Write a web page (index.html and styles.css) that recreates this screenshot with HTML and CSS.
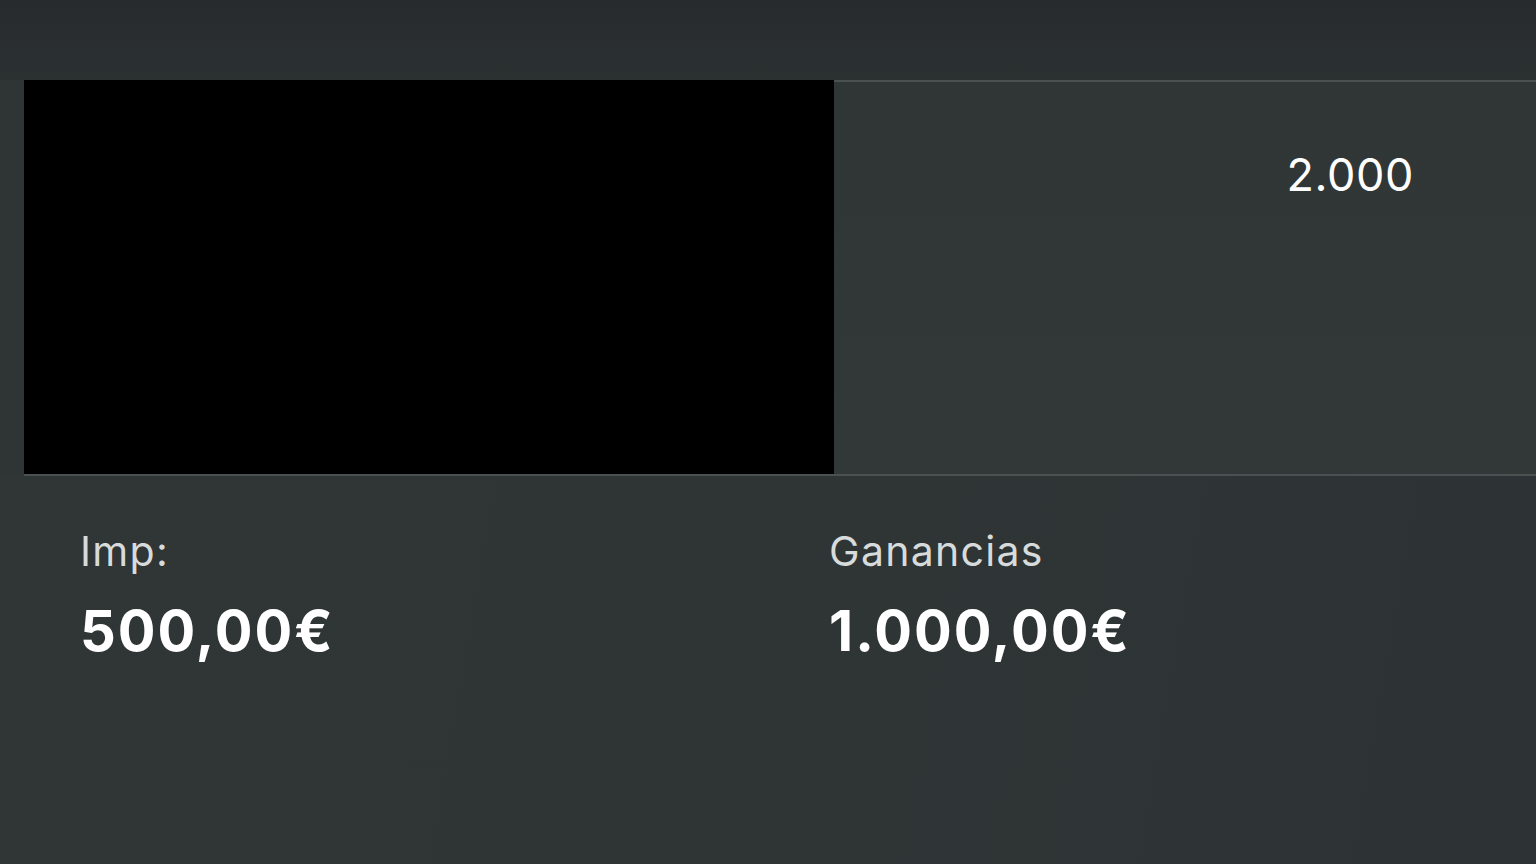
FILE: index.html
```html
<!DOCTYPE html>
<html lang="es">
<head>
    <meta charset="UTF-8">
    <meta name="viewport" content="width=device-width, initial-scale=1.0">
    <title>Resumen de apuesta</title>
    <link rel="stylesheet" href="styles.css">
</head>
<body>
    <div class="topbar"></div>

    <!-- Tarjeta principal: vídeo + cuota -->
    <div class="card">
        <div class="media"></div>
        <div class="summary">
            <span class="odds">2.000</span>
        </div>
    </div>

    <div class="divider"></div>

    <!-- Importe y ganancias -->
    <div class="stats">
        <div class="stat">
            <p class="stat-label">Imp:</p>
            <p class="stat-value">500,00€</p>
        </div>
        <div class="stat">
            <p class="stat-label">Ganancias</p>
            <p class="stat-value">1.000,00€</p>
        </div>
    </div>
</body>
</html>
```

FILE: styles.css
```css
body {
    margin: 0;
    height: 864px;
    overflow: hidden;
    font-family: Inter, "Noto Sans", sans-serif;
    background: linear-gradient(100deg, #303636 0%, #2f3535 60%, #2d3234 100%);
    color: #ffffff;
}

.topbar {
    height: 80px;
    background: linear-gradient(180deg, #272b2d 0%, #2b3031 100%);
}

.card {
    display: flex;
    padding-left: 24px;
    height: 394px;
    background: linear-gradient(90deg, #2f3434 0%, #323838 100%);
}

.media {
    width: 810px;
    background-color: #000000;
}

.summary {
    flex: 1;
    border-top: 2px solid #4b5151;
    text-align: right;
    padding-right: 122px;
    background: linear-gradient(180deg, #303636 0%, #323838 100%);
}

.odds {
    display: inline-block;
    margin-top: 65px;
    font-size: 45px;
    letter-spacing: 0.6px;
    color: #ffffff;
}

.divider {
    margin-left: 24px;
    height: 2px;
    background-color: #4b5151;
}

.stats {
    display: grid;
    grid-template-columns: 749px 1fr;
    padding: 50px 0 0 80px;
}

.stat-label {
    margin: 0;
    font-size: 41px;
    letter-spacing: 1.3px;
    color: #d8dbdb;
}

.stat-value {
    margin: 21px 0 0;
    font-size: 56px;
    font-weight: 700;
    letter-spacing: 2px;
    color: #ffffff;
}
```
